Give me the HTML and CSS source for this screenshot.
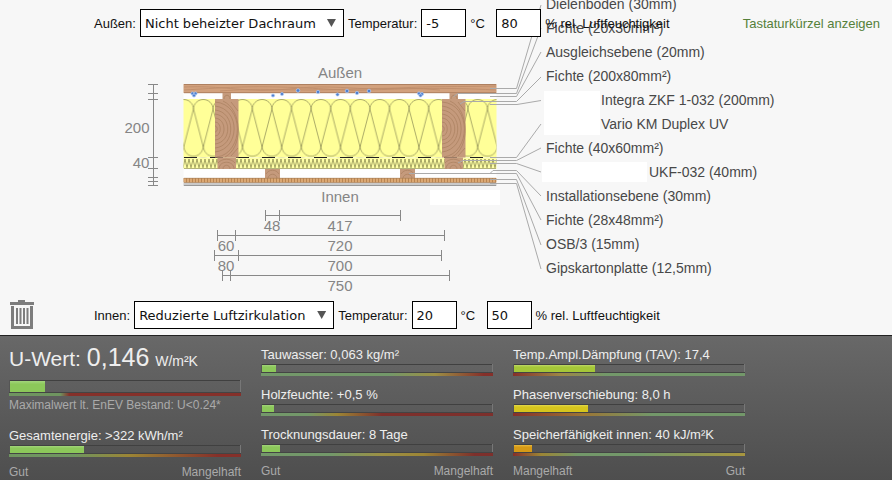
FILE: index.html
```html
<!DOCTYPE html>
<html lang="de">
<head>
<meta charset="utf-8">
<title>U-Wert-Rechner</title>
<link rel="stylesheet" href="styles.css">
</head>
<body>
<main class="stage">
  <svg class="diagram" viewBox="110 0 690 294" role="img" aria-label="Querschnitt des Bauteils">
    <defs>
      <pattern id="loops" x="183.7" y="99" width="19.6" height="58.5" patternUnits="userSpaceOnUse">
        <path d="M0 .5C5.500 .5 9.8 5 9.8 10C9.8 5 14.100 .5 19.6 .5M9.8 10L0 48M9.8 10L19.6 48M0 46C0 61 19.6 61 19.6 46" fill="none" stroke="#96965a" stroke-width=".8"/>
      </pattern>
      <pattern id="zigzag" x="183" y="158" width="4" height="11" patternUnits="userSpaceOnUse">
        <path d="M0 10L2 1L4 10" fill="none" stroke="#8c8c50" stroke-width=".8"/>
      </pattern>
      <pattern id="osb" x="183" y="178" width="3" height="5" patternUnits="userSpaceOnUse">
        <path d="M0 0H3V5H0Z" fill="#dba873"/><path d="M.5 0V5" stroke="#b98552"/>
      </pattern>
      <g id="post">
        <path d="M0 0H23.5V58.5H0Z" fill="#c59a7c"/>
        <g fill="none" stroke="#a9805f" stroke-width=".7">
          <path d="M0 27C3 27 3 33 0 33M0 23C7 23 7 37 0 37M0 19C12 20 12 40 0 41M0 15C17 17 17 43 0 45M0 11C21 13 21 47 0 49M0 7C26 10 25 50 0 53M0 3C30 5 29 54 2 58M8 2C28 11 28 49 10 58M16 3L23 12M16 57L23 49"/>
        </g>
        <path d="M2.5 58.5H21V70H2.5Z" fill="#c59a7c"/>
        <path d="M4 70C4 61 19 61 19 70M8 70C8 65 15 65 15 70M3 64C7 59 16 59 20 64" fill="none" stroke="#a9805f" stroke-width=".7"/>
        <path d="M7.500-6H16V0H7.500Z" fill="#c59a7c"/>
        <path d="M9 0C9-5 15-5 15 0" fill="none" stroke="#a9805f" stroke-width=".7"/>
      </g>
    </defs>

    <path d="M183.500 93H496.500V99H183.500ZM183.500 169H496.500V178H183.500Z" fill="#fefefe"/>
    <path d="M183.500 84H496.500V93H183.500Z" fill="#d2a17d"/>
    <path d="M184 84.500H496M184 92.700H496" stroke="#ae8060"/>
    <path d="M184 87C210 86 220 88 250 90S300 86 330 87S370 90 400 88S460 87 496 86M184 90C220 88 240 86 280 87S340 91 370 90S440 87 496 90M220 91C260 88 270 90 310 90S400 86 440 90" fill="none" stroke="#bd8b69" stroke-width=".8"/>
    <path d="M183.500 99H496.500V157.500H183.500Z" fill="#ffff98"/>
    <path d="M183.500 99H496.500V157.500H183.500Z" fill="url(#loops)"/>
    <path d="M183.500 158H496.500V169H183.500Z" fill="#ffffa6"/>
    <path d="M183.500 158H496.500V169H183.500Z" fill="url(#zigzag)"/>
    <path d="M184 168.500H496" stroke="#b4b477"/>
    <path d="M184 157.500H496" stroke="#222" stroke-width="1" stroke-dasharray="13 13"/>
    <use href="#post" x="215" y="99"/>
    <use href="#post" x="442" y="99"/>
    <path d="M265 169H280V178H265ZM400 169H415V178H400Z" fill="#c59a7c"/>
    <path d="M266 174C269 169 276 169 279 174M268 178C269 173 276 173 277 178M401 174C404 169 411 169 414 174M403 178C404 173 411 173 412 178" fill="none" stroke="#a9805f" stroke-width=".7"/>
    <path d="M183.500 178H496.500V182.500H183.500Z" fill="url(#osb)"/>
    <path d="M184 178.300H496M184 182.500H496" stroke="#a98059" stroke-width=".7"/>
    <path d="M183.500 183H496.500V186H183.500Z" fill="#c9c9c9"/>
    <path d="M184 185.500H496" stroke="#999"/>

    <g fill="#4f80cf" stroke="#b3cdf5" stroke-width=".7">
      <circle cx="192.500" cy="93.500" r="1.600"/><circle cx="195.500" cy="93.500" r="1.600"/><circle cx="194" cy="95.500" r="1.600"/>
      <circle cx="273" cy="95.500" r="1.600"/><circle cx="282" cy="94" r="1.600"/><circle cx="298" cy="90.500" r="1.800"/>
      <circle cx="318" cy="92" r="1.700"/><circle cx="337.500" cy="94.500" r="1.600"/><circle cx="347" cy="91" r="1.800"/>
      <circle cx="357" cy="93" r="1.700"/><circle cx="369" cy="91" r="1.800"/>
      <circle cx="419" cy="93.500" r="1.600"/><circle cx="422" cy="94" r="1.600"/><circle cx="420.500" cy="95.500" r="1.600"/>
    </g>

    <g class="leaders">
      <path d="M490 88.500H516.500L541 5"/>
      <path d="M453.500 96.500L458 93.500H516.500L541 28"/>
      <path d="M490 96.500H516.500L541 52"/>
      <path d="M460 104L464 101.500H516.500L541 77"/>
      <path d="M490 104.500H517L541 100.500"/>
      <path d="M490 157.500H516.500L541 124"/>
      <path d="M458 163L463 160.500H516.500L541 148"/>
      <path d="M490 163.500H516.500L541 172"/>
      <path d="M490 173.500L493 170.500H516.500L541 196"/>
      <path d="M409 173.500H516.500L541 220"/>
      <path d="M490 179.500H516.500L541 245"/>
      <path d="M490 183.500H516.500L541 269"/>
    </g>

    <path d="M544 91H600V135H544ZM542 162H647V182H542ZM430 190H500V205H430Z" fill="#fff"/>

    <g class="dimension-lines">
      <path d="M153.500 84V186M148 84.500H158M148 93.500H158M148 99.500H158M148 157.500H158M148 168.500H158M148 177.500H158M148 181.500H158M148 185.500H158"/>
      <path d="M265.500 215.500H400.500M265.500 210V221M279.500 210V221M400.500 210V221"/>
      <path d="M217.500 235.500H444.500M217.500 230V241M235.500 230V241M444.500 230V241"/>
      <path d="M214.500 255.500H441.500M214.500 250V261M238.500 250V261M441.500 250V261"/>
      <path d="M222.500 275.500H449.500M222.500 270V281M230.500 270V281M449.500 270V281"/>
    </g>
    <g class="dimension">
      <text x="137" y="133">200</text><text x="141" y="168">40</text>
      <text x="340" y="78">Außen</text><text x="340" y="202">Innen</text>
      <text x="272" y="231">48</text><text x="340" y="231">417</text>
      <text x="226" y="251">60</text><text x="340" y="251">720</text>
      <text x="226" y="271">80</text><text x="340" y="271">700</text>
      <text x="340" y="291">750</text>
    </g>
    <g class="material">
      <text x="546" y="9">Dielenboden (30mm)</text>
      <text x="546" y="33">Fichte (20x30mm²)</text>
      <text x="546" y="57">Ausgleichsebene (20mm)</text>
      <text x="546" y="81">Fichte (200x80mm²)</text>
      <text x="601" y="105">Integra ZKF 1-032 (200mm)</text>
      <text x="601" y="129">Vario KM Duplex UV</text>
      <text x="546" y="153">Fichte (40x60mm²)</text>
      <text x="649" y="177">UKF-032 (40mm)</text>
      <text x="546" y="201">Installationsebene (30mm)</text>
      <text x="546" y="225">Fichte (28x48mm²)</text>
      <text x="546" y="249">OSB/3 (15mm)</text>
      <text x="546" y="273">Gipskartonplatte (12,5mm)</text>
    </g>
  </svg>

  <form class="climate climate-outside">
    <label for="outside">Außen:</label>
    <span class="picker picker-outside"><select id="outside"><option>Nicht beheizter Dachraum</option></select></span>
    <label for="outside-temp">Temperatur:</label>
    <input id="outside-temp" value="-5">
    <span class="unit">°C</span>
    <input id="outside-humidity" value="80">
    <label for="outside-humidity">% rel. Luftfeuchtigkeit</label>
    <a class="shortcuts" href="#">Tastaturkürzel anzeigen</a>
  </form>

  <form class="climate climate-inside">
    <button class="trash" type="button" aria-label="Löschen">
      <svg viewBox="0 0 26 30" width="26" height="30">
        <path d="M1 2H9V0H16V2H25V5H1Z" fill="#7d7d7d"/>
        <path d="M3.500 6V27.500H22.500V6" fill="none" stroke="#7d7d7d" stroke-width="3"/>
        <path d="M8 8V24M11.500 8V24M15 8V24M18.500 8V24" stroke="#7d7d7d" stroke-width="2"/>
      </svg>
    </button>
    <label for="inside">Innen:</label>
    <span class="picker picker-inside"><select id="inside"><option>Reduzierte Luftzirkulation</option></select></span>
    <label for="inside-temp">Temperatur:</label>
    <input id="inside-temp" value="20">
    <span class="unit">°C</span>
    <input id="inside-humidity" value="50">
    <label for="inside-humidity">% rel. Luftfeuchtigkeit</label>
  </form>
</main>

<section class="results">
  <div class="column">
    <div class="metric metric-main">
      <h1 class="headline">U-Wert: <strong>0,146</strong> <small>W/m²K</small></h1>
      <div class="bar bar-tall"><div class="fill green" style="width:15%"></div></div>
      <div class="scale scale-limit"></div>
      <p class="note">Maximalwert lt. EnEV Bestand: U&lt;0.24*</p>
    </div>
    <div class="metric">
      <p class="name">Gesamtenergie: &gt;322 kWh/m²</p>
      <div class="bar"><div class="fill green" style="width:32%"></div></div>
      <div class="scale scale-energy"></div>
    </div>
    <div class="legend"><span>Gut</span><span>Mangelhaft</span></div>
  </div>
  <div class="column">
    <div class="metric">
      <p class="name">Tauwasser: 0,063 kg/m²</p>
      <div class="bar"><div class="fill green" style="width:6%"></div></div>
      <div class="scale scale-dew"></div>
    </div>
    <div class="metric">
      <p class="name">Holzfeuchte: +0,5 %</p>
      <div class="bar"><div class="fill green" style="width:5%"></div></div>
      <div class="scale scale-wood"></div>
    </div>
    <div class="metric">
      <p class="name">Trocknungsdauer: 8 Tage</p>
      <div class="bar"><div class="fill green" style="width:8%"></div></div>
      <div class="scale scale-drying"></div>
    </div>
    <div class="legend"><span>Gut</span><span>Mangelhaft</span></div>
  </div>
  <div class="column">
    <div class="metric">
      <p class="name">Temp.Ampl.Dämpfung (TAV): 17,4</p>
      <div class="bar"><div class="fill lime" style="width:35%"></div></div>
      <div class="scale scale-damping"></div>
    </div>
    <div class="metric">
      <p class="name">Phasenverschiebung: 8,0 h</p>
      <div class="bar"><div class="fill yellow" style="width:32%"></div></div>
      <div class="scale scale-phase"></div>
    </div>
    <div class="metric">
      <p class="name">Speicherfähigkeit innen: 40 kJ/m²K</p>
      <div class="bar"><div class="fill orange" style="width:8%"></div></div>
      <div class="scale scale-storage"></div>
    </div>
    <div class="legend"><span>Mangelhaft</span><span>Gut</span></div>
  </div>
</section>
</body>
</html>
```
FILE: styles.css
```css
* {
  box-sizing: border-box;
}

body {
  margin: 0;
  min-height: 100vh;
  display: flex;
  flex-direction: column;
  background: #f7f7f7;
  color: #111;
  font-family: "Liberation Sans", Arial, sans-serif;
  font-size: 13px;
}

p,
h1 {
  margin: 0;
}

/* The drawing shares its first row with the outside climate controls. */
.stage {
  display: grid;
  grid-template-rows: auto 1fr auto;
  padding-bottom: 5px;
}

.diagram {
  grid-area: 1 / 1 / 3 / 2;
  width: 690px;
  margin: 0 0 6px 110px;
  display: block;
}

.leaders path {
  fill: none;
  stroke: #aaa;
  stroke-width: 1;
}

.dimension-lines path {
  fill: none;
  stroke: #888;
}

.dimension {
  fill: #858585;
  font-size: 15px;
  text-anchor: middle;
}

.material {
  fill: #484848;
  font-size: 14px;
}

.climate {
  z-index: 1;
  display: flex;
  align-items: center;
  gap: 4px;
  padding-right: 12px;
}

.climate-outside {
  grid-area: 1 / 1;
  margin-top: 9px;
  padding-left: 94px;
}

.climate-inside {
  grid-area: 3 / 1;
  padding-left: 9px;
}

.climate input,
.climate select {
  height: 28px;
  border: 1px solid #000;
  border-radius: 0;
  background: #fff;
  color: #111;
  font: 13px "DejaVu Sans", Verdana, sans-serif;
}

.climate input {
  width: 45px;
  padding: 0 4px;
}

.climate select {
  appearance: none;
  width: 100%;
  padding: 0 24px 0 4px;
}

.unit {
  width: 22px;
}

.picker {
  position: relative;
}

.picker-outside {
  width: 204px;
}

.picker-inside {
  width: 200px;
}

.picker::after {
  content: "";
  position: absolute;
  top: 10px;
  right: 8px;
  width: 9px;
  height: 8px;
  background: #555;
  clip-path: polygon(0 0, 100% 0, 50% 100%);
  pointer-events: none;
}

.shortcuts {
  margin-left: auto;
  color: #55803a;
  text-decoration: none;
}

.trash {
  width: 26px;
  height: 30px;
  margin-right: 55px;
  padding: 0;
  border: 0;
  background: none;
}

.trash svg {
  display: block;
}

.results {
  flex: 1;
  display: grid;
  grid-template-columns: repeat(3, minmax(0, 232px));
  gap: 20px;
  padding: 9px 9px 0;
  border-top: 1px solid #222;
  background: linear-gradient(#686868, #4e4e4e);
  color: #eee;
}

.metric {
  padding-bottom: 9px;
}

.metric-main {
  padding-bottom: 13px;
}

.name {
  line-height: 19px;
  white-space: nowrap;
}

.headline {
  margin-bottom: 7px;
  font-size: 21px;
  font-weight: 400;
  line-height: 24px;
  white-space: nowrap;
}

.headline strong {
  font-size: 25px;
  font-weight: 400;
}

.headline small {
  font-size: 14px;
}

.note {
  margin-top: 1px;
  color: #aaa;
  font-size: 12px;
  line-height: 16px;
}

.bar {
  height: 8px;
  padding-top: 1px;
  border: 1px solid #777;
  border-width: 0 1px 0 1px;
  border-left-color: #555;
  box-shadow: inset 0 1px #404040;
}

.bar-tall {
  height: 12px;
}

.fill {
  height: 100%;
}

.green {
  background: linear-gradient(#a3d57c, #8cc85a 30%);
}

.lime {
  background: linear-gradient(#bfd968, #a5c738 30%);
}

.yellow {
  background: linear-gradient(#e2d94b, #d6c51d 30%);
}

.orange {
  background: linear-gradient(#e8bb40, #d69a16 30%);
}

.scale {
  height: 4px;
  border-top: 1px solid #444;
}

.scale-limit {
  background: linear-gradient(90deg, #6f9560, #6f9560 22%, #85302a 26%);
}

.scale-energy {
  background: linear-gradient(90deg, #6f9560 28%, #9c8535 52%, #85302a 90%);
}

.scale-dew {
  background: linear-gradient(90deg, #73986a 55%, #9c8f45 75%, #85302a 96%);
}

.scale-wood {
  background: linear-gradient(90deg, #73986a 20%, #9c8535 33%, #7d302c 52%);
}

.scale-drying {
  background: linear-gradient(90deg, #73986a 30%, #9c9045 52%, #9c8535 70%, #7d302c 92%);
}

.scale-damping {
  background: linear-gradient(90deg, #85302a, #9c8545 20%, #73986a 40%);
}

.scale-phase {
  background: linear-gradient(90deg, #85302a, #9c7535 30%, #73986a 60%);
}

.scale-storage {
  background: linear-gradient(90deg, #85302a, #9c8535 12%, #73986a 28%, #73986a 55%, #a8963f);
}

.legend {
  display: flex;
  justify-content: space-between;
  color: #aaa;
  font-size: 12px;
  line-height: 12px;
}
```
